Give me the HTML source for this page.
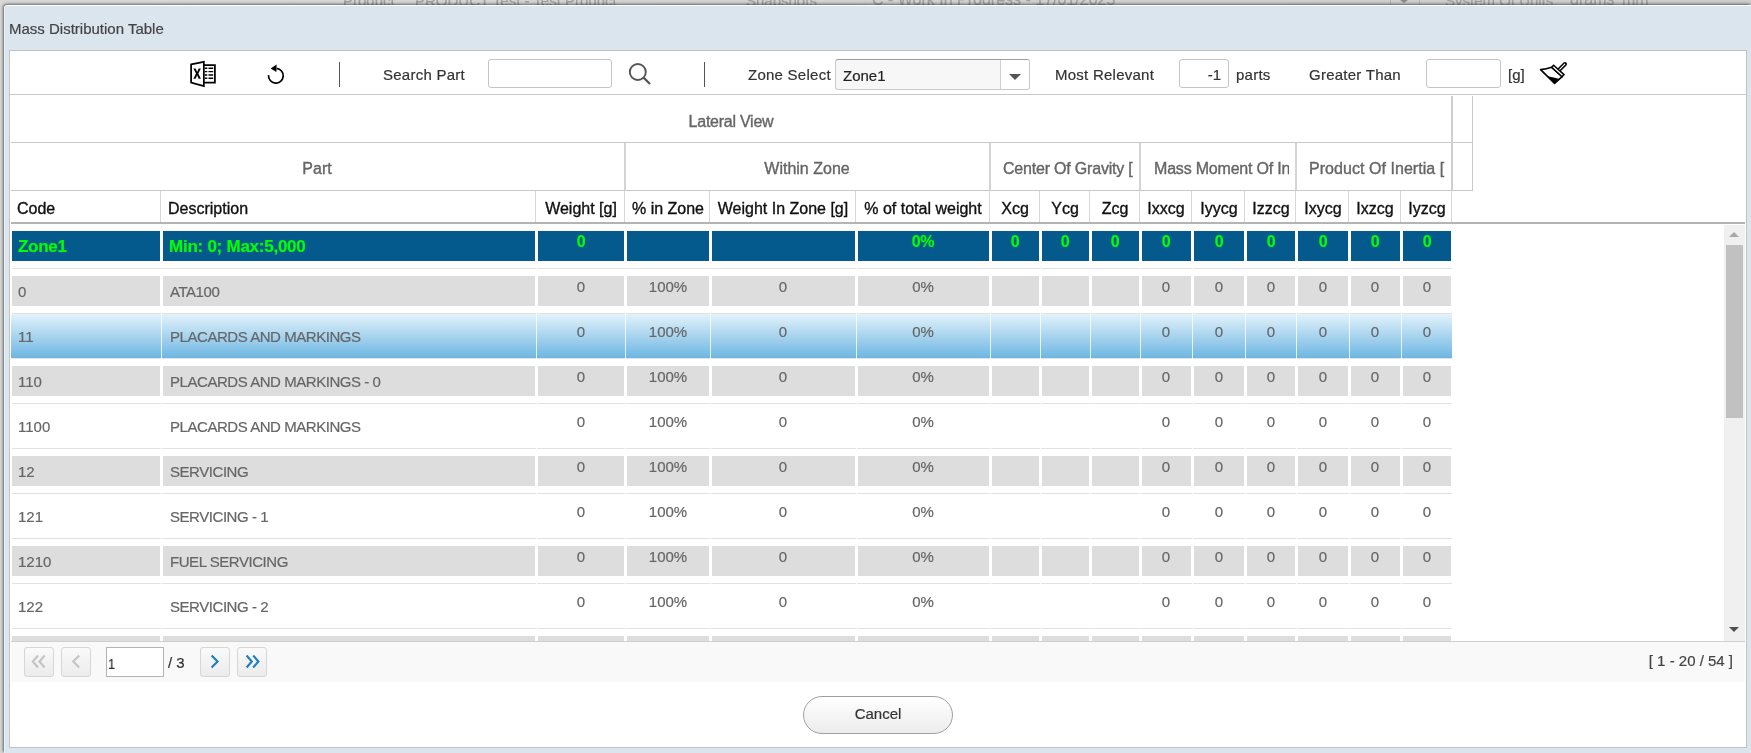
<!DOCTYPE html>
<html><head><meta charset="utf-8"><title>Mass Distribution Table</title>
<style>
html,body{margin:0;padding:0;width:1751px;height:753px;overflow:hidden;background:#c9c9c9}
body{position:relative;font-family:"Liberation Sans", sans-serif}
body div{position:absolute}
.t{white-space:nowrap;line-height:1;will-change:transform;-webkit-text-stroke:0.2px currentColor}
</style></head><body>
<div style="left:0px;top:0px;width:1751px;height:753px;background:linear-gradient(90deg,#d8d8d8,#cdcdcd)"></div>
<div class="t" style="left:343px;top:-6.70px;font-size:15px;color:#a0a0a0;font-weight:normal;">Product</div>
<div class="t" style="left:415px;top:-6.70px;font-size:15px;color:#a0a0a0;font-weight:normal;">PRODUCT Test - Test Product</div>
<div class="t" style="left:746px;top:-6.70px;font-size:15px;color:#a0a0a0;font-weight:normal;">Snapshots</div>
<div class="t" style="left:872px;top:-7.54px;font-size:16px;color:#a0a0a0;font-weight:normal;">C - Work In Progress - 17/01/2025</div>
<div class="t" style="left:1445px;top:-6.70px;font-size:15px;color:#a0a0a0;font-weight:normal;">System Of Units</div>
<div class="t" style="left:1570px;top:-7.54px;font-size:16px;color:#a0a0a0;font-weight:normal;">grams</div>
<div class="t" style="left:1622px;top:-7.54px;font-size:16px;color:#a0a0a0;font-weight:normal;">mm</div>
<div style="left:864px;top:0px;width:1px;height:5px;background:#cfcfcf"></div>
<div style="left:1390px;top:0px;width:1px;height:5px;background:#b5b5b5"></div>
<div style="left:1419px;top:0px;width:1px;height:5px;background:#b5b5b5"></div>
<div style="left:1400px;top:0px;width:0;height:0;border-left:4.5px solid transparent;border-right:4.5px solid transparent;border-top:3px solid #8a8a8a"></div>
<div style="left:4px;top:5px;width:1747px;height:748px;background:#dbe5ee;border-top-left-radius:4px;box-shadow:-1px -1px 3px rgba(0,0,0,0.55),inset 0 1px 0 rgba(255,255,255,0.9),inset 1px 0 0 rgba(255,255,255,0.45)"></div>
<div class="t" style="left:9px;top:21.30px;font-size:15px;color:#444;font-weight:normal;">Mass Distribution Table</div>
<div style="left:10px;top:51px;width:1736px;height:696px;background:#fff;box-shadow:0 0 0 1px #c3c3c3"></div>
<div style="left:10px;top:94px;width:1736px;height:1px;background:#c8c8c8"></div>
<svg style="position:absolute;left:186px;top:58px" width="36" height="32" viewBox="0 0 36 32">
<path d="M5.1 6.35 L17.85 3.85 L17.85 28.05 L5.1 24.65 Z" fill="#fff" stroke="#000" stroke-width="1.75" stroke-linejoin="miter"/>
<path d="M17.85 7.05 L28.9 7.05 L28.9 24.65 L17.85 24.65" fill="none" stroke="#000" stroke-width="1.75"/>
<path d="M18.9 10.2 H21.3 M22.5 10.2 H27.2 M18.9 13.6 H21.3 M22.5 13.6 H27.2 M18.9 17.0 H21.3 M22.5 17.0 H27.2 M18.9 20.2 H21.3 M22.5 20.2 H27.2" stroke="#000" stroke-width="1.4"/>
<path d="M7.4 10.4 L9.6 10.4 L11.15 13.9 L12.7 10.4 L14.9 10.4 L12.3 15.6 L14.9 20.8 L12.7 20.8 L11.15 17.3 L9.6 20.8 L7.4 20.8 L10.0 15.6 Z" fill="#000"/>
</svg>
<svg style="position:absolute;left:262px;top:62px" width="28" height="26" viewBox="0 0 28 26">
<path d="M6.55 13.1 A7.35 7.35 0 1 0 14.6 6.4" fill="none" stroke="#000" stroke-width="1.75"/>
<path d="M8.6 6.4 L14.6 2.6 L14.4 10.0 Z" fill="#000"/>
</svg>
<div style="left:339px;top:62px;width:1px;height:25px;background:#555"></div>
<div class="t" style="left:383px;top:66.90px;font-size:15px;color:#333;font-weight:normal;letter-spacing:0.25px">Search Part</div>
<div style="left:488px;top:59px;width:124px;height:29px;border:1px solid #c4c4c4;border-radius:3px;box-sizing:border-box;background:#fff"></div>
<svg style="position:absolute;left:624px;top:60px" width="32" height="28" viewBox="0 0 32 28">
<circle cx="13.8" cy="12" r="8.0" fill="none" stroke="#555" stroke-width="1.9"/>
<path d="M19.6 17.6 L26 24" stroke="#555" stroke-width="2.2" stroke-linecap="butt"/>
</svg>
<div style="left:704px;top:62px;width:1px;height:25px;background:#555"></div>
<div class="t" style="left:748px;top:66.70px;font-size:15px;color:#333;font-weight:normal;letter-spacing:0.25px">Zone Select</div>
<div style="left:835px;top:59px;width:195px;height:31px;border:1px solid #c9c9c9;border-top-color:#9d9d9d;border-radius:3px;box-sizing:border-box;background:#f7f7f7"></div>
<div style="left:1000px;top:60px;width:1px;height:29px;background:#d0d0d0"></div>
<div style="left:1001px;top:60px;width:28px;height:29px;background:#fff;border-radius:0 2px 2px 0"></div>
<div style="left:1009px;top:74px;width:0;height:0;border-left:6px solid transparent;border-right:6px solid transparent;border-top:6px solid #555"></div>
<div class="t" style="left:843px;top:67.50px;font-size:15px;color:#222;font-weight:normal;">Zone1</div>
<div class="t" style="left:1054.5px;top:66.70px;font-size:15px;color:#333;font-weight:normal;letter-spacing:0.25px">Most Relevant</div>
<div style="left:1179px;top:59px;width:50px;height:29px;border:1px solid #c4c4c4;border-radius:3px;box-sizing:border-box;background:#fff"></div>
<div class="t" style="left:821px;width:400px;text-align:right;top:67.10px;font-size:15px;color:#333;font-weight:normal;">-1</div>
<div class="t" style="left:1236px;top:66.70px;font-size:15px;color:#333;font-weight:normal;letter-spacing:0.25px">parts</div>
<div class="t" style="left:1309px;top:66.80px;font-size:15px;color:#333;font-weight:normal;letter-spacing:0.25px">Greater Than</div>
<div style="left:1426px;top:59px;width:75px;height:29px;border:1px solid #c4c4c4;border-radius:3px;box-sizing:border-box;background:#fff"></div>
<div class="t" style="left:1507.5px;top:66.80px;font-size:15px;color:#333;font-weight:normal;">[g]</div>
<svg style="position:absolute;left:1536px;top:58px" width="36" height="30" viewBox="0 0 36 30">
<path d="M23.0 12.0 L29.0 6.0" stroke="#000" stroke-width="4" stroke-linecap="round"/>
<path d="M23.4 11.6 L28.8 6.2" stroke="#fff" stroke-width="1.2" stroke-linecap="round"/>
<path d="M4.6 11.6 Q10.5 11.3 15.7 9.3 L26.1 18.7 L18.6 25.4 Z" fill="#fff" stroke="#000" stroke-width="1.6" stroke-linejoin="round"/>
<path d="M11.5 18.2 Q17.5 19 23.6 21.1 L18.6 25.4 Z" fill="#000"/>
<path d="M17.6 7.2 L28.0 16.6 L26.1 18.7 L15.7 9.3 Z" fill="#fff" stroke="#000" stroke-width="1.5" stroke-linejoin="miter"/>
</svg>
<div style="left:11px;top:142px;width:1462px;height:1px;background:#c9c9c9"></div>
<div style="left:1451px;top:96px;width:2px;height:95px;background:#cfcfcf"></div>
<div style="left:1451px;top:191px;width:1px;height:32px;background:#d8d8d8"></div>
<div style="left:1472px;top:96px;width:1px;height:95px;background:#c9c9c9"></div>
<div style="left:11px;top:190px;width:1462px;height:1px;background:#c9c9c9"></div>
<div class="t" style="left:531px;width:400px;text-align:center;top:114.26px;font-size:16px;color:#666;font-weight:normal;letter-spacing:-0.25px;-webkit-text-stroke:0.38px #666">Lateral View</div>
<div style="left:624px;top:143px;width:2px;height:47px;background:#d4d4d4"></div>
<div style="left:989px;top:143px;width:2px;height:47px;background:#d4d4d4"></div>
<div style="left:1139px;top:143px;width:2px;height:47px;background:#d4d4d4"></div>
<div style="left:1295px;top:143px;width:2px;height:47px;background:#d4d4d4"></div>
<div class="t" style="left:117px;width:400px;text-align:center;top:161.06px;font-size:16px;color:#666;font-weight:normal;-webkit-text-stroke:0.38px #666">Part</div>
<div class="t" style="left:607px;width:400px;text-align:center;top:161.06px;font-size:16px;color:#666;font-weight:normal;-webkit-text-stroke:0.38px #666">Within Zone</div>
<div style="left:992px;top:143px;width:146px;height:47px;overflow:hidden">
<div class="t" style="left:11px;top:18.06px;font-size:16px;color:#666;letter-spacing:-0.2px;-webkit-text-stroke:0.38px #666">Center Of Gravity [</div></div>
<div style="left:1142px;top:143px;width:147px;height:47px;overflow:hidden">
<div class="t" style="left:11.5px;top:18.06px;font-size:16px;color:#666;letter-spacing:-0.2px;-webkit-text-stroke:0.38px #666">Mass Moment Of Inertia</div></div>
<div style="left:1298px;top:143px;width:152px;height:47px;overflow:hidden">
<div class="t" style="left:11px;top:18.06px;font-size:16px;color:#666;letter-spacing:0.05px;-webkit-text-stroke:0.38px #666">Product Of Inertia [</div></div>
<div style="left:160px;top:191px;width:1px;height:32px;background:#d8d8d8"></div>
<div style="left:535px;top:191px;width:1px;height:32px;background:#d8d8d8"></div>
<div style="left:624px;top:191px;width:1px;height:32px;background:#d8d8d8"></div>
<div style="left:709px;top:191px;width:1px;height:32px;background:#d8d8d8"></div>
<div style="left:855px;top:191px;width:1px;height:32px;background:#d8d8d8"></div>
<div style="left:989px;top:191px;width:1px;height:32px;background:#d8d8d8"></div>
<div style="left:1039px;top:191px;width:1px;height:32px;background:#d8d8d8"></div>
<div style="left:1089px;top:191px;width:1px;height:32px;background:#d8d8d8"></div>
<div style="left:1139px;top:191px;width:1px;height:32px;background:#d8d8d8"></div>
<div style="left:1191px;top:191px;width:1px;height:32px;background:#d8d8d8"></div>
<div style="left:1244px;top:191px;width:1px;height:32px;background:#d8d8d8"></div>
<div style="left:1295px;top:191px;width:1px;height:32px;background:#d8d8d8"></div>
<div style="left:1348px;top:191px;width:1px;height:32px;background:#d8d8d8"></div>
<div style="left:1400px;top:191px;width:1px;height:32px;background:#d8d8d8"></div>
<div style="left:11px;top:222px;width:1734px;height:2px;background:#b4b4b4"></div>
<div class="t" style="left:17px;top:201.46px;font-size:16px;color:#111;font-weight:normal;-webkit-text-stroke:0.35px #111">Code</div>
<div class="t" style="left:168px;top:201.46px;font-size:16px;color:#111;font-weight:normal;-webkit-text-stroke:0.35px #111">Description</div>
<div class="t" style="left:380.5px;width:400px;text-align:center;top:201.46px;font-size:16px;color:#111;font-weight:normal;-webkit-text-stroke:0.35px #111">Weight [g]</div>
<div class="t" style="left:467.5px;width:400px;text-align:center;top:201.46px;font-size:16px;color:#111;font-weight:normal;-webkit-text-stroke:0.35px #111">% in Zone</div>
<div class="t" style="left:583.0px;width:400px;text-align:center;top:201.46px;font-size:16px;color:#111;font-weight:normal;-webkit-text-stroke:0.35px #111">Weight In Zone [g]</div>
<div class="t" style="left:723.0px;width:400px;text-align:center;top:201.46px;font-size:16px;color:#111;font-weight:normal;-webkit-text-stroke:0.35px #111">% of total weight</div>
<div class="t" style="left:815.0px;width:400px;text-align:center;top:201.46px;font-size:16px;color:#111;font-weight:normal;-webkit-text-stroke:0.35px #111">Xcg</div>
<div class="t" style="left:865.0px;width:400px;text-align:center;top:201.46px;font-size:16px;color:#111;font-weight:normal;-webkit-text-stroke:0.35px #111">Ycg</div>
<div class="t" style="left:915.0px;width:400px;text-align:center;top:201.46px;font-size:16px;color:#111;font-weight:normal;-webkit-text-stroke:0.35px #111">Zcg</div>
<div class="t" style="left:966.0px;width:400px;text-align:center;top:201.46px;font-size:16px;color:#111;font-weight:normal;-webkit-text-stroke:0.35px #111">Ixxcg</div>
<div class="t" style="left:1018.5px;width:400px;text-align:center;top:201.46px;font-size:16px;color:#111;font-weight:normal;-webkit-text-stroke:0.35px #111">Iyycg</div>
<div class="t" style="left:1070.5px;width:400px;text-align:center;top:201.46px;font-size:16px;color:#111;font-weight:normal;-webkit-text-stroke:0.35px #111">Izzcg</div>
<div class="t" style="left:1122.5px;width:400px;text-align:center;top:201.46px;font-size:16px;color:#111;font-weight:normal;-webkit-text-stroke:0.35px #111">Ixycg</div>
<div class="t" style="left:1175.0px;width:400px;text-align:center;top:201.46px;font-size:16px;color:#111;font-weight:normal;-webkit-text-stroke:0.35px #111">Ixzcg</div>
<div class="t" style="left:1226.5px;width:400px;text-align:center;top:201.46px;font-size:16px;color:#111;font-weight:normal;-webkit-text-stroke:0.35px #111">Iyzcg</div>
<div style="left:11px;top:224px;width:1713px;height:417px;overflow:hidden">
<div style="left:1px;top:44px;width:149px;height:1px;background:#e2e2e2"></div>
<div style="left:151px;top:44px;width:374px;height:1px;background:#e2e2e2"></div>
<div style="left:526px;top:44px;width:88px;height:1px;background:#e2e2e2"></div>
<div style="left:615px;top:44px;width:84px;height:1px;background:#e2e2e2"></div>
<div style="left:700px;top:44px;width:145px;height:1px;background:#e2e2e2"></div>
<div style="left:846px;top:44px;width:133px;height:1px;background:#e2e2e2"></div>
<div style="left:980px;top:44px;width:49px;height:1px;background:#e2e2e2"></div>
<div style="left:1030px;top:44px;width:49px;height:1px;background:#e2e2e2"></div>
<div style="left:1080px;top:44px;width:49px;height:1px;background:#e2e2e2"></div>
<div style="left:1130px;top:44px;width:51px;height:1px;background:#e2e2e2"></div>
<div style="left:1182px;top:44px;width:52px;height:1px;background:#e2e2e2"></div>
<div style="left:1235px;top:44px;width:50px;height:1px;background:#e2e2e2"></div>
<div style="left:1286px;top:44px;width:52px;height:1px;background:#e2e2e2"></div>
<div style="left:1339px;top:44px;width:51px;height:1px;background:#e2e2e2"></div>
<div style="left:1391px;top:44px;width:50px;height:1px;background:#e2e2e2"></div>
<div style="left:1px;top:7px;width:148px;height:30px;background:#045a8d"></div>
<div style="left:152px;top:7px;width:372px;height:30px;background:#045a8d"></div>
<div style="left:527px;top:7px;width:86px;height:30px;background:#045a8d"></div>
<div style="left:616px;top:7px;width:82px;height:30px;background:#045a8d"></div>
<div style="left:701px;top:7px;width:143px;height:30px;background:#045a8d"></div>
<div style="left:847px;top:7px;width:131px;height:30px;background:#045a8d"></div>
<div style="left:981px;top:7px;width:47px;height:30px;background:#045a8d"></div>
<div style="left:1031px;top:7px;width:47px;height:30px;background:#045a8d"></div>
<div style="left:1081px;top:7px;width:47px;height:30px;background:#045a8d"></div>
<div style="left:1131px;top:7px;width:49px;height:30px;background:#045a8d"></div>
<div style="left:1183px;top:7px;width:50px;height:30px;background:#045a8d"></div>
<div style="left:1236px;top:7px;width:48px;height:30px;background:#045a8d"></div>
<div style="left:1287px;top:7px;width:50px;height:30px;background:#045a8d"></div>
<div style="left:1340px;top:7px;width:49px;height:30px;background:#045a8d"></div>
<div style="left:1392px;top:7px;width:48px;height:30px;background:#045a8d"></div>
<div class="t" style="left:7px;top:14.11px;font-size:17px;color:#00ff00;font-weight:bold;letter-spacing:-0.3px">Zone1</div>
<div class="t" style="left:158px;top:14.11px;font-size:17px;color:#00ff00;font-weight:bold;letter-spacing:-0.25px">Min: 0; Max:5,000</div>
<div class="t" style="left:369.5px;width:400px;text-align:center;top:10.46px;font-size:16px;color:#00ff00;font-weight:bold;letter-spacing:-0.4px">0</div>
<div class="t" style="left:712.0px;width:400px;text-align:center;top:10.46px;font-size:16px;color:#00ff00;font-weight:bold;letter-spacing:-0.4px">0%</div>
<div class="t" style="left:804.0px;width:400px;text-align:center;top:10.46px;font-size:16px;color:#00ff00;font-weight:bold;letter-spacing:-0.4px">0</div>
<div class="t" style="left:854.0px;width:400px;text-align:center;top:10.46px;font-size:16px;color:#00ff00;font-weight:bold;letter-spacing:-0.4px">0</div>
<div class="t" style="left:904.0px;width:400px;text-align:center;top:10.46px;font-size:16px;color:#00ff00;font-weight:bold;letter-spacing:-0.4px">0</div>
<div class="t" style="left:955.0px;width:400px;text-align:center;top:10.46px;font-size:16px;color:#00ff00;font-weight:bold;letter-spacing:-0.4px">0</div>
<div class="t" style="left:1007.5px;width:400px;text-align:center;top:10.46px;font-size:16px;color:#00ff00;font-weight:bold;letter-spacing:-0.4px">0</div>
<div class="t" style="left:1059.5px;width:400px;text-align:center;top:10.46px;font-size:16px;color:#00ff00;font-weight:bold;letter-spacing:-0.4px">0</div>
<div class="t" style="left:1111.5px;width:400px;text-align:center;top:10.46px;font-size:16px;color:#00ff00;font-weight:bold;letter-spacing:-0.4px">0</div>
<div class="t" style="left:1164.0px;width:400px;text-align:center;top:10.46px;font-size:16px;color:#00ff00;font-weight:bold;letter-spacing:-0.4px">0</div>
<div class="t" style="left:1215.5px;width:400px;text-align:center;top:10.46px;font-size:16px;color:#00ff00;font-weight:bold;letter-spacing:-0.4px">0</div>
<div style="left:1px;top:89px;width:149px;height:1px;background:#e2e2e2"></div>
<div style="left:151px;top:89px;width:374px;height:1px;background:#e2e2e2"></div>
<div style="left:526px;top:89px;width:88px;height:1px;background:#e2e2e2"></div>
<div style="left:615px;top:89px;width:84px;height:1px;background:#e2e2e2"></div>
<div style="left:700px;top:89px;width:145px;height:1px;background:#e2e2e2"></div>
<div style="left:846px;top:89px;width:133px;height:1px;background:#e2e2e2"></div>
<div style="left:980px;top:89px;width:49px;height:1px;background:#e2e2e2"></div>
<div style="left:1030px;top:89px;width:49px;height:1px;background:#e2e2e2"></div>
<div style="left:1080px;top:89px;width:49px;height:1px;background:#e2e2e2"></div>
<div style="left:1130px;top:89px;width:51px;height:1px;background:#e2e2e2"></div>
<div style="left:1182px;top:89px;width:52px;height:1px;background:#e2e2e2"></div>
<div style="left:1235px;top:89px;width:50px;height:1px;background:#e2e2e2"></div>
<div style="left:1286px;top:89px;width:52px;height:1px;background:#e2e2e2"></div>
<div style="left:1339px;top:89px;width:51px;height:1px;background:#e2e2e2"></div>
<div style="left:1391px;top:89px;width:50px;height:1px;background:#e2e2e2"></div>
<div style="left:1px;top:52px;width:148px;height:30px;background:#dddddd"></div>
<div style="left:152px;top:52px;width:372px;height:30px;background:#dddddd"></div>
<div style="left:527px;top:52px;width:86px;height:30px;background:#dddddd"></div>
<div style="left:616px;top:52px;width:82px;height:30px;background:#dddddd"></div>
<div style="left:701px;top:52px;width:143px;height:30px;background:#dddddd"></div>
<div style="left:847px;top:52px;width:131px;height:30px;background:#dddddd"></div>
<div style="left:981px;top:52px;width:47px;height:30px;background:#dddddd"></div>
<div style="left:1031px;top:52px;width:47px;height:30px;background:#dddddd"></div>
<div style="left:1081px;top:52px;width:47px;height:30px;background:#dddddd"></div>
<div style="left:1131px;top:52px;width:49px;height:30px;background:#dddddd"></div>
<div style="left:1183px;top:52px;width:50px;height:30px;background:#dddddd"></div>
<div style="left:1236px;top:52px;width:48px;height:30px;background:#dddddd"></div>
<div style="left:1287px;top:52px;width:50px;height:30px;background:#dddddd"></div>
<div style="left:1340px;top:52px;width:49px;height:30px;background:#dddddd"></div>
<div style="left:1392px;top:52px;width:48px;height:30px;background:#dddddd"></div>
<div class="t" style="left:7px;top:60.30px;font-size:15px;color:#666;font-weight:normal;">0</div>
<div class="t" style="left:159px;top:60.30px;font-size:15px;color:#666;font-weight:normal;letter-spacing:-0.45px">ATA100</div>
<div class="t" style="left:369.5px;width:400px;text-align:center;top:55.30px;font-size:15px;color:#666;font-weight:normal;">0</div>
<div class="t" style="left:456.5px;width:400px;text-align:center;top:55.30px;font-size:15px;color:#666;font-weight:normal;">100%</div>
<div class="t" style="left:572.0px;width:400px;text-align:center;top:55.30px;font-size:15px;color:#666;font-weight:normal;">0</div>
<div class="t" style="left:712.0px;width:400px;text-align:center;top:55.30px;font-size:15px;color:#666;font-weight:normal;">0%</div>
<div class="t" style="left:955.0px;width:400px;text-align:center;top:55.30px;font-size:15px;color:#666;font-weight:normal;">0</div>
<div class="t" style="left:1007.5px;width:400px;text-align:center;top:55.30px;font-size:15px;color:#666;font-weight:normal;">0</div>
<div class="t" style="left:1059.5px;width:400px;text-align:center;top:55.30px;font-size:15px;color:#666;font-weight:normal;">0</div>
<div class="t" style="left:1111.5px;width:400px;text-align:center;top:55.30px;font-size:15px;color:#666;font-weight:normal;">0</div>
<div class="t" style="left:1164.0px;width:400px;text-align:center;top:55.30px;font-size:15px;color:#666;font-weight:normal;">0</div>
<div class="t" style="left:1215.5px;width:400px;text-align:center;top:55.30px;font-size:15px;color:#666;font-weight:normal;">0</div>
<div style="left:-1px;top:90px;width:1442px;height:44px;background:linear-gradient(#e3f2fb,#6db6e2)"></div>
<div style="left:150px;top:90px;width:1px;height:44px;background:rgba(255,255,255,0.8)"></div>
<div style="left:525px;top:90px;width:1px;height:44px;background:rgba(255,255,255,0.8)"></div>
<div style="left:614px;top:90px;width:1px;height:44px;background:rgba(255,255,255,0.8)"></div>
<div style="left:699px;top:90px;width:1px;height:44px;background:rgba(255,255,255,0.8)"></div>
<div style="left:845px;top:90px;width:1px;height:44px;background:rgba(255,255,255,0.8)"></div>
<div style="left:979px;top:90px;width:1px;height:44px;background:rgba(255,255,255,0.8)"></div>
<div style="left:1029px;top:90px;width:1px;height:44px;background:rgba(255,255,255,0.8)"></div>
<div style="left:1079px;top:90px;width:1px;height:44px;background:rgba(255,255,255,0.8)"></div>
<div style="left:1129px;top:90px;width:1px;height:44px;background:rgba(255,255,255,0.8)"></div>
<div style="left:1181px;top:90px;width:1px;height:44px;background:rgba(255,255,255,0.8)"></div>
<div style="left:1234px;top:90px;width:1px;height:44px;background:rgba(255,255,255,0.8)"></div>
<div style="left:1285px;top:90px;width:1px;height:44px;background:rgba(255,255,255,0.8)"></div>
<div style="left:1338px;top:90px;width:1px;height:44px;background:rgba(255,255,255,0.8)"></div>
<div style="left:1390px;top:90px;width:1px;height:44px;background:rgba(255,255,255,0.8)"></div>
<div style="left:1px;top:134px;width:149px;height:1px;background:#e2e2e2"></div>
<div style="left:151px;top:134px;width:374px;height:1px;background:#e2e2e2"></div>
<div style="left:526px;top:134px;width:88px;height:1px;background:#e2e2e2"></div>
<div style="left:615px;top:134px;width:84px;height:1px;background:#e2e2e2"></div>
<div style="left:700px;top:134px;width:145px;height:1px;background:#e2e2e2"></div>
<div style="left:846px;top:134px;width:133px;height:1px;background:#e2e2e2"></div>
<div style="left:980px;top:134px;width:49px;height:1px;background:#e2e2e2"></div>
<div style="left:1030px;top:134px;width:49px;height:1px;background:#e2e2e2"></div>
<div style="left:1080px;top:134px;width:49px;height:1px;background:#e2e2e2"></div>
<div style="left:1130px;top:134px;width:51px;height:1px;background:#e2e2e2"></div>
<div style="left:1182px;top:134px;width:52px;height:1px;background:#e2e2e2"></div>
<div style="left:1235px;top:134px;width:50px;height:1px;background:#e2e2e2"></div>
<div style="left:1286px;top:134px;width:52px;height:1px;background:#e2e2e2"></div>
<div style="left:1339px;top:134px;width:51px;height:1px;background:#e2e2e2"></div>
<div style="left:1391px;top:134px;width:50px;height:1px;background:#e2e2e2"></div>
<div class="t" style="left:7px;top:105.30px;font-size:15px;color:#666;font-weight:normal;">11</div>
<div class="t" style="left:159px;top:105.30px;font-size:15px;color:#666;font-weight:normal;letter-spacing:-0.45px">PLACARDS AND MARKINGS</div>
<div class="t" style="left:369.5px;width:400px;text-align:center;top:100.30px;font-size:15px;color:#666;font-weight:normal;">0</div>
<div class="t" style="left:456.5px;width:400px;text-align:center;top:100.30px;font-size:15px;color:#666;font-weight:normal;">100%</div>
<div class="t" style="left:572.0px;width:400px;text-align:center;top:100.30px;font-size:15px;color:#666;font-weight:normal;">0</div>
<div class="t" style="left:712.0px;width:400px;text-align:center;top:100.30px;font-size:15px;color:#666;font-weight:normal;">0%</div>
<div class="t" style="left:955.0px;width:400px;text-align:center;top:100.30px;font-size:15px;color:#666;font-weight:normal;">0</div>
<div class="t" style="left:1007.5px;width:400px;text-align:center;top:100.30px;font-size:15px;color:#666;font-weight:normal;">0</div>
<div class="t" style="left:1059.5px;width:400px;text-align:center;top:100.30px;font-size:15px;color:#666;font-weight:normal;">0</div>
<div class="t" style="left:1111.5px;width:400px;text-align:center;top:100.30px;font-size:15px;color:#666;font-weight:normal;">0</div>
<div class="t" style="left:1164.0px;width:400px;text-align:center;top:100.30px;font-size:15px;color:#666;font-weight:normal;">0</div>
<div class="t" style="left:1215.5px;width:400px;text-align:center;top:100.30px;font-size:15px;color:#666;font-weight:normal;">0</div>
<div style="left:1px;top:179px;width:149px;height:1px;background:#e2e2e2"></div>
<div style="left:151px;top:179px;width:374px;height:1px;background:#e2e2e2"></div>
<div style="left:526px;top:179px;width:88px;height:1px;background:#e2e2e2"></div>
<div style="left:615px;top:179px;width:84px;height:1px;background:#e2e2e2"></div>
<div style="left:700px;top:179px;width:145px;height:1px;background:#e2e2e2"></div>
<div style="left:846px;top:179px;width:133px;height:1px;background:#e2e2e2"></div>
<div style="left:980px;top:179px;width:49px;height:1px;background:#e2e2e2"></div>
<div style="left:1030px;top:179px;width:49px;height:1px;background:#e2e2e2"></div>
<div style="left:1080px;top:179px;width:49px;height:1px;background:#e2e2e2"></div>
<div style="left:1130px;top:179px;width:51px;height:1px;background:#e2e2e2"></div>
<div style="left:1182px;top:179px;width:52px;height:1px;background:#e2e2e2"></div>
<div style="left:1235px;top:179px;width:50px;height:1px;background:#e2e2e2"></div>
<div style="left:1286px;top:179px;width:52px;height:1px;background:#e2e2e2"></div>
<div style="left:1339px;top:179px;width:51px;height:1px;background:#e2e2e2"></div>
<div style="left:1391px;top:179px;width:50px;height:1px;background:#e2e2e2"></div>
<div style="left:1px;top:142px;width:148px;height:30px;background:#dddddd"></div>
<div style="left:152px;top:142px;width:372px;height:30px;background:#dddddd"></div>
<div style="left:527px;top:142px;width:86px;height:30px;background:#dddddd"></div>
<div style="left:616px;top:142px;width:82px;height:30px;background:#dddddd"></div>
<div style="left:701px;top:142px;width:143px;height:30px;background:#dddddd"></div>
<div style="left:847px;top:142px;width:131px;height:30px;background:#dddddd"></div>
<div style="left:981px;top:142px;width:47px;height:30px;background:#dddddd"></div>
<div style="left:1031px;top:142px;width:47px;height:30px;background:#dddddd"></div>
<div style="left:1081px;top:142px;width:47px;height:30px;background:#dddddd"></div>
<div style="left:1131px;top:142px;width:49px;height:30px;background:#dddddd"></div>
<div style="left:1183px;top:142px;width:50px;height:30px;background:#dddddd"></div>
<div style="left:1236px;top:142px;width:48px;height:30px;background:#dddddd"></div>
<div style="left:1287px;top:142px;width:50px;height:30px;background:#dddddd"></div>
<div style="left:1340px;top:142px;width:49px;height:30px;background:#dddddd"></div>
<div style="left:1392px;top:142px;width:48px;height:30px;background:#dddddd"></div>
<div class="t" style="left:7px;top:150.30px;font-size:15px;color:#666;font-weight:normal;">110</div>
<div class="t" style="left:159px;top:150.30px;font-size:15px;color:#666;font-weight:normal;letter-spacing:-0.45px">PLACARDS AND MARKINGS - 0</div>
<div class="t" style="left:369.5px;width:400px;text-align:center;top:145.30px;font-size:15px;color:#666;font-weight:normal;">0</div>
<div class="t" style="left:456.5px;width:400px;text-align:center;top:145.30px;font-size:15px;color:#666;font-weight:normal;">100%</div>
<div class="t" style="left:572.0px;width:400px;text-align:center;top:145.30px;font-size:15px;color:#666;font-weight:normal;">0</div>
<div class="t" style="left:712.0px;width:400px;text-align:center;top:145.30px;font-size:15px;color:#666;font-weight:normal;">0%</div>
<div class="t" style="left:955.0px;width:400px;text-align:center;top:145.30px;font-size:15px;color:#666;font-weight:normal;">0</div>
<div class="t" style="left:1007.5px;width:400px;text-align:center;top:145.30px;font-size:15px;color:#666;font-weight:normal;">0</div>
<div class="t" style="left:1059.5px;width:400px;text-align:center;top:145.30px;font-size:15px;color:#666;font-weight:normal;">0</div>
<div class="t" style="left:1111.5px;width:400px;text-align:center;top:145.30px;font-size:15px;color:#666;font-weight:normal;">0</div>
<div class="t" style="left:1164.0px;width:400px;text-align:center;top:145.30px;font-size:15px;color:#666;font-weight:normal;">0</div>
<div class="t" style="left:1215.5px;width:400px;text-align:center;top:145.30px;font-size:15px;color:#666;font-weight:normal;">0</div>
<div style="left:1px;top:224px;width:149px;height:1px;background:#e2e2e2"></div>
<div style="left:151px;top:224px;width:374px;height:1px;background:#e2e2e2"></div>
<div style="left:526px;top:224px;width:88px;height:1px;background:#e2e2e2"></div>
<div style="left:615px;top:224px;width:84px;height:1px;background:#e2e2e2"></div>
<div style="left:700px;top:224px;width:145px;height:1px;background:#e2e2e2"></div>
<div style="left:846px;top:224px;width:133px;height:1px;background:#e2e2e2"></div>
<div style="left:980px;top:224px;width:49px;height:1px;background:#e2e2e2"></div>
<div style="left:1030px;top:224px;width:49px;height:1px;background:#e2e2e2"></div>
<div style="left:1080px;top:224px;width:49px;height:1px;background:#e2e2e2"></div>
<div style="left:1130px;top:224px;width:51px;height:1px;background:#e2e2e2"></div>
<div style="left:1182px;top:224px;width:52px;height:1px;background:#e2e2e2"></div>
<div style="left:1235px;top:224px;width:50px;height:1px;background:#e2e2e2"></div>
<div style="left:1286px;top:224px;width:52px;height:1px;background:#e2e2e2"></div>
<div style="left:1339px;top:224px;width:51px;height:1px;background:#e2e2e2"></div>
<div style="left:1391px;top:224px;width:50px;height:1px;background:#e2e2e2"></div>
<div class="t" style="left:7px;top:195.30px;font-size:15px;color:#666;font-weight:normal;">1100</div>
<div class="t" style="left:159px;top:195.30px;font-size:15px;color:#666;font-weight:normal;letter-spacing:-0.45px">PLACARDS AND MARKINGS</div>
<div class="t" style="left:369.5px;width:400px;text-align:center;top:190.30px;font-size:15px;color:#666;font-weight:normal;">0</div>
<div class="t" style="left:456.5px;width:400px;text-align:center;top:190.30px;font-size:15px;color:#666;font-weight:normal;">100%</div>
<div class="t" style="left:572.0px;width:400px;text-align:center;top:190.30px;font-size:15px;color:#666;font-weight:normal;">0</div>
<div class="t" style="left:712.0px;width:400px;text-align:center;top:190.30px;font-size:15px;color:#666;font-weight:normal;">0%</div>
<div class="t" style="left:955.0px;width:400px;text-align:center;top:190.30px;font-size:15px;color:#666;font-weight:normal;">0</div>
<div class="t" style="left:1007.5px;width:400px;text-align:center;top:190.30px;font-size:15px;color:#666;font-weight:normal;">0</div>
<div class="t" style="left:1059.5px;width:400px;text-align:center;top:190.30px;font-size:15px;color:#666;font-weight:normal;">0</div>
<div class="t" style="left:1111.5px;width:400px;text-align:center;top:190.30px;font-size:15px;color:#666;font-weight:normal;">0</div>
<div class="t" style="left:1164.0px;width:400px;text-align:center;top:190.30px;font-size:15px;color:#666;font-weight:normal;">0</div>
<div class="t" style="left:1215.5px;width:400px;text-align:center;top:190.30px;font-size:15px;color:#666;font-weight:normal;">0</div>
<div style="left:1px;top:269px;width:149px;height:1px;background:#e2e2e2"></div>
<div style="left:151px;top:269px;width:374px;height:1px;background:#e2e2e2"></div>
<div style="left:526px;top:269px;width:88px;height:1px;background:#e2e2e2"></div>
<div style="left:615px;top:269px;width:84px;height:1px;background:#e2e2e2"></div>
<div style="left:700px;top:269px;width:145px;height:1px;background:#e2e2e2"></div>
<div style="left:846px;top:269px;width:133px;height:1px;background:#e2e2e2"></div>
<div style="left:980px;top:269px;width:49px;height:1px;background:#e2e2e2"></div>
<div style="left:1030px;top:269px;width:49px;height:1px;background:#e2e2e2"></div>
<div style="left:1080px;top:269px;width:49px;height:1px;background:#e2e2e2"></div>
<div style="left:1130px;top:269px;width:51px;height:1px;background:#e2e2e2"></div>
<div style="left:1182px;top:269px;width:52px;height:1px;background:#e2e2e2"></div>
<div style="left:1235px;top:269px;width:50px;height:1px;background:#e2e2e2"></div>
<div style="left:1286px;top:269px;width:52px;height:1px;background:#e2e2e2"></div>
<div style="left:1339px;top:269px;width:51px;height:1px;background:#e2e2e2"></div>
<div style="left:1391px;top:269px;width:50px;height:1px;background:#e2e2e2"></div>
<div style="left:1px;top:232px;width:148px;height:30px;background:#dddddd"></div>
<div style="left:152px;top:232px;width:372px;height:30px;background:#dddddd"></div>
<div style="left:527px;top:232px;width:86px;height:30px;background:#dddddd"></div>
<div style="left:616px;top:232px;width:82px;height:30px;background:#dddddd"></div>
<div style="left:701px;top:232px;width:143px;height:30px;background:#dddddd"></div>
<div style="left:847px;top:232px;width:131px;height:30px;background:#dddddd"></div>
<div style="left:981px;top:232px;width:47px;height:30px;background:#dddddd"></div>
<div style="left:1031px;top:232px;width:47px;height:30px;background:#dddddd"></div>
<div style="left:1081px;top:232px;width:47px;height:30px;background:#dddddd"></div>
<div style="left:1131px;top:232px;width:49px;height:30px;background:#dddddd"></div>
<div style="left:1183px;top:232px;width:50px;height:30px;background:#dddddd"></div>
<div style="left:1236px;top:232px;width:48px;height:30px;background:#dddddd"></div>
<div style="left:1287px;top:232px;width:50px;height:30px;background:#dddddd"></div>
<div style="left:1340px;top:232px;width:49px;height:30px;background:#dddddd"></div>
<div style="left:1392px;top:232px;width:48px;height:30px;background:#dddddd"></div>
<div class="t" style="left:7px;top:240.30px;font-size:15px;color:#666;font-weight:normal;">12</div>
<div class="t" style="left:159px;top:240.30px;font-size:15px;color:#666;font-weight:normal;letter-spacing:-0.45px">SERVICING</div>
<div class="t" style="left:369.5px;width:400px;text-align:center;top:235.30px;font-size:15px;color:#666;font-weight:normal;">0</div>
<div class="t" style="left:456.5px;width:400px;text-align:center;top:235.30px;font-size:15px;color:#666;font-weight:normal;">100%</div>
<div class="t" style="left:572.0px;width:400px;text-align:center;top:235.30px;font-size:15px;color:#666;font-weight:normal;">0</div>
<div class="t" style="left:712.0px;width:400px;text-align:center;top:235.30px;font-size:15px;color:#666;font-weight:normal;">0%</div>
<div class="t" style="left:955.0px;width:400px;text-align:center;top:235.30px;font-size:15px;color:#666;font-weight:normal;">0</div>
<div class="t" style="left:1007.5px;width:400px;text-align:center;top:235.30px;font-size:15px;color:#666;font-weight:normal;">0</div>
<div class="t" style="left:1059.5px;width:400px;text-align:center;top:235.30px;font-size:15px;color:#666;font-weight:normal;">0</div>
<div class="t" style="left:1111.5px;width:400px;text-align:center;top:235.30px;font-size:15px;color:#666;font-weight:normal;">0</div>
<div class="t" style="left:1164.0px;width:400px;text-align:center;top:235.30px;font-size:15px;color:#666;font-weight:normal;">0</div>
<div class="t" style="left:1215.5px;width:400px;text-align:center;top:235.30px;font-size:15px;color:#666;font-weight:normal;">0</div>
<div style="left:1px;top:314px;width:149px;height:1px;background:#e2e2e2"></div>
<div style="left:151px;top:314px;width:374px;height:1px;background:#e2e2e2"></div>
<div style="left:526px;top:314px;width:88px;height:1px;background:#e2e2e2"></div>
<div style="left:615px;top:314px;width:84px;height:1px;background:#e2e2e2"></div>
<div style="left:700px;top:314px;width:145px;height:1px;background:#e2e2e2"></div>
<div style="left:846px;top:314px;width:133px;height:1px;background:#e2e2e2"></div>
<div style="left:980px;top:314px;width:49px;height:1px;background:#e2e2e2"></div>
<div style="left:1030px;top:314px;width:49px;height:1px;background:#e2e2e2"></div>
<div style="left:1080px;top:314px;width:49px;height:1px;background:#e2e2e2"></div>
<div style="left:1130px;top:314px;width:51px;height:1px;background:#e2e2e2"></div>
<div style="left:1182px;top:314px;width:52px;height:1px;background:#e2e2e2"></div>
<div style="left:1235px;top:314px;width:50px;height:1px;background:#e2e2e2"></div>
<div style="left:1286px;top:314px;width:52px;height:1px;background:#e2e2e2"></div>
<div style="left:1339px;top:314px;width:51px;height:1px;background:#e2e2e2"></div>
<div style="left:1391px;top:314px;width:50px;height:1px;background:#e2e2e2"></div>
<div class="t" style="left:7px;top:285.30px;font-size:15px;color:#666;font-weight:normal;">121</div>
<div class="t" style="left:159px;top:285.30px;font-size:15px;color:#666;font-weight:normal;letter-spacing:-0.45px">SERVICING - 1</div>
<div class="t" style="left:369.5px;width:400px;text-align:center;top:280.30px;font-size:15px;color:#666;font-weight:normal;">0</div>
<div class="t" style="left:456.5px;width:400px;text-align:center;top:280.30px;font-size:15px;color:#666;font-weight:normal;">100%</div>
<div class="t" style="left:572.0px;width:400px;text-align:center;top:280.30px;font-size:15px;color:#666;font-weight:normal;">0</div>
<div class="t" style="left:712.0px;width:400px;text-align:center;top:280.30px;font-size:15px;color:#666;font-weight:normal;">0%</div>
<div class="t" style="left:955.0px;width:400px;text-align:center;top:280.30px;font-size:15px;color:#666;font-weight:normal;">0</div>
<div class="t" style="left:1007.5px;width:400px;text-align:center;top:280.30px;font-size:15px;color:#666;font-weight:normal;">0</div>
<div class="t" style="left:1059.5px;width:400px;text-align:center;top:280.30px;font-size:15px;color:#666;font-weight:normal;">0</div>
<div class="t" style="left:1111.5px;width:400px;text-align:center;top:280.30px;font-size:15px;color:#666;font-weight:normal;">0</div>
<div class="t" style="left:1164.0px;width:400px;text-align:center;top:280.30px;font-size:15px;color:#666;font-weight:normal;">0</div>
<div class="t" style="left:1215.5px;width:400px;text-align:center;top:280.30px;font-size:15px;color:#666;font-weight:normal;">0</div>
<div style="left:1px;top:359px;width:149px;height:1px;background:#e2e2e2"></div>
<div style="left:151px;top:359px;width:374px;height:1px;background:#e2e2e2"></div>
<div style="left:526px;top:359px;width:88px;height:1px;background:#e2e2e2"></div>
<div style="left:615px;top:359px;width:84px;height:1px;background:#e2e2e2"></div>
<div style="left:700px;top:359px;width:145px;height:1px;background:#e2e2e2"></div>
<div style="left:846px;top:359px;width:133px;height:1px;background:#e2e2e2"></div>
<div style="left:980px;top:359px;width:49px;height:1px;background:#e2e2e2"></div>
<div style="left:1030px;top:359px;width:49px;height:1px;background:#e2e2e2"></div>
<div style="left:1080px;top:359px;width:49px;height:1px;background:#e2e2e2"></div>
<div style="left:1130px;top:359px;width:51px;height:1px;background:#e2e2e2"></div>
<div style="left:1182px;top:359px;width:52px;height:1px;background:#e2e2e2"></div>
<div style="left:1235px;top:359px;width:50px;height:1px;background:#e2e2e2"></div>
<div style="left:1286px;top:359px;width:52px;height:1px;background:#e2e2e2"></div>
<div style="left:1339px;top:359px;width:51px;height:1px;background:#e2e2e2"></div>
<div style="left:1391px;top:359px;width:50px;height:1px;background:#e2e2e2"></div>
<div style="left:1px;top:322px;width:148px;height:30px;background:#dddddd"></div>
<div style="left:152px;top:322px;width:372px;height:30px;background:#dddddd"></div>
<div style="left:527px;top:322px;width:86px;height:30px;background:#dddddd"></div>
<div style="left:616px;top:322px;width:82px;height:30px;background:#dddddd"></div>
<div style="left:701px;top:322px;width:143px;height:30px;background:#dddddd"></div>
<div style="left:847px;top:322px;width:131px;height:30px;background:#dddddd"></div>
<div style="left:981px;top:322px;width:47px;height:30px;background:#dddddd"></div>
<div style="left:1031px;top:322px;width:47px;height:30px;background:#dddddd"></div>
<div style="left:1081px;top:322px;width:47px;height:30px;background:#dddddd"></div>
<div style="left:1131px;top:322px;width:49px;height:30px;background:#dddddd"></div>
<div style="left:1183px;top:322px;width:50px;height:30px;background:#dddddd"></div>
<div style="left:1236px;top:322px;width:48px;height:30px;background:#dddddd"></div>
<div style="left:1287px;top:322px;width:50px;height:30px;background:#dddddd"></div>
<div style="left:1340px;top:322px;width:49px;height:30px;background:#dddddd"></div>
<div style="left:1392px;top:322px;width:48px;height:30px;background:#dddddd"></div>
<div class="t" style="left:7px;top:330.30px;font-size:15px;color:#666;font-weight:normal;">1210</div>
<div class="t" style="left:159px;top:330.30px;font-size:15px;color:#666;font-weight:normal;letter-spacing:-0.45px">FUEL SERVICING</div>
<div class="t" style="left:369.5px;width:400px;text-align:center;top:325.30px;font-size:15px;color:#666;font-weight:normal;">0</div>
<div class="t" style="left:456.5px;width:400px;text-align:center;top:325.30px;font-size:15px;color:#666;font-weight:normal;">100%</div>
<div class="t" style="left:572.0px;width:400px;text-align:center;top:325.30px;font-size:15px;color:#666;font-weight:normal;">0</div>
<div class="t" style="left:712.0px;width:400px;text-align:center;top:325.30px;font-size:15px;color:#666;font-weight:normal;">0%</div>
<div class="t" style="left:955.0px;width:400px;text-align:center;top:325.30px;font-size:15px;color:#666;font-weight:normal;">0</div>
<div class="t" style="left:1007.5px;width:400px;text-align:center;top:325.30px;font-size:15px;color:#666;font-weight:normal;">0</div>
<div class="t" style="left:1059.5px;width:400px;text-align:center;top:325.30px;font-size:15px;color:#666;font-weight:normal;">0</div>
<div class="t" style="left:1111.5px;width:400px;text-align:center;top:325.30px;font-size:15px;color:#666;font-weight:normal;">0</div>
<div class="t" style="left:1164.0px;width:400px;text-align:center;top:325.30px;font-size:15px;color:#666;font-weight:normal;">0</div>
<div class="t" style="left:1215.5px;width:400px;text-align:center;top:325.30px;font-size:15px;color:#666;font-weight:normal;">0</div>
<div style="left:1px;top:404px;width:149px;height:1px;background:#e2e2e2"></div>
<div style="left:151px;top:404px;width:374px;height:1px;background:#e2e2e2"></div>
<div style="left:526px;top:404px;width:88px;height:1px;background:#e2e2e2"></div>
<div style="left:615px;top:404px;width:84px;height:1px;background:#e2e2e2"></div>
<div style="left:700px;top:404px;width:145px;height:1px;background:#e2e2e2"></div>
<div style="left:846px;top:404px;width:133px;height:1px;background:#e2e2e2"></div>
<div style="left:980px;top:404px;width:49px;height:1px;background:#e2e2e2"></div>
<div style="left:1030px;top:404px;width:49px;height:1px;background:#e2e2e2"></div>
<div style="left:1080px;top:404px;width:49px;height:1px;background:#e2e2e2"></div>
<div style="left:1130px;top:404px;width:51px;height:1px;background:#e2e2e2"></div>
<div style="left:1182px;top:404px;width:52px;height:1px;background:#e2e2e2"></div>
<div style="left:1235px;top:404px;width:50px;height:1px;background:#e2e2e2"></div>
<div style="left:1286px;top:404px;width:52px;height:1px;background:#e2e2e2"></div>
<div style="left:1339px;top:404px;width:51px;height:1px;background:#e2e2e2"></div>
<div style="left:1391px;top:404px;width:50px;height:1px;background:#e2e2e2"></div>
<div class="t" style="left:7px;top:375.30px;font-size:15px;color:#666;font-weight:normal;">122</div>
<div class="t" style="left:159px;top:375.30px;font-size:15px;color:#666;font-weight:normal;letter-spacing:-0.45px">SERVICING - 2</div>
<div class="t" style="left:369.5px;width:400px;text-align:center;top:370.30px;font-size:15px;color:#666;font-weight:normal;">0</div>
<div class="t" style="left:456.5px;width:400px;text-align:center;top:370.30px;font-size:15px;color:#666;font-weight:normal;">100%</div>
<div class="t" style="left:572.0px;width:400px;text-align:center;top:370.30px;font-size:15px;color:#666;font-weight:normal;">0</div>
<div class="t" style="left:712.0px;width:400px;text-align:center;top:370.30px;font-size:15px;color:#666;font-weight:normal;">0%</div>
<div class="t" style="left:955.0px;width:400px;text-align:center;top:370.30px;font-size:15px;color:#666;font-weight:normal;">0</div>
<div class="t" style="left:1007.5px;width:400px;text-align:center;top:370.30px;font-size:15px;color:#666;font-weight:normal;">0</div>
<div class="t" style="left:1059.5px;width:400px;text-align:center;top:370.30px;font-size:15px;color:#666;font-weight:normal;">0</div>
<div class="t" style="left:1111.5px;width:400px;text-align:center;top:370.30px;font-size:15px;color:#666;font-weight:normal;">0</div>
<div class="t" style="left:1164.0px;width:400px;text-align:center;top:370.30px;font-size:15px;color:#666;font-weight:normal;">0</div>
<div class="t" style="left:1215.5px;width:400px;text-align:center;top:370.30px;font-size:15px;color:#666;font-weight:normal;">0</div>
<div style="left:1px;top:449px;width:149px;height:1px;background:#e2e2e2"></div>
<div style="left:151px;top:449px;width:374px;height:1px;background:#e2e2e2"></div>
<div style="left:526px;top:449px;width:88px;height:1px;background:#e2e2e2"></div>
<div style="left:615px;top:449px;width:84px;height:1px;background:#e2e2e2"></div>
<div style="left:700px;top:449px;width:145px;height:1px;background:#e2e2e2"></div>
<div style="left:846px;top:449px;width:133px;height:1px;background:#e2e2e2"></div>
<div style="left:980px;top:449px;width:49px;height:1px;background:#e2e2e2"></div>
<div style="left:1030px;top:449px;width:49px;height:1px;background:#e2e2e2"></div>
<div style="left:1080px;top:449px;width:49px;height:1px;background:#e2e2e2"></div>
<div style="left:1130px;top:449px;width:51px;height:1px;background:#e2e2e2"></div>
<div style="left:1182px;top:449px;width:52px;height:1px;background:#e2e2e2"></div>
<div style="left:1235px;top:449px;width:50px;height:1px;background:#e2e2e2"></div>
<div style="left:1286px;top:449px;width:52px;height:1px;background:#e2e2e2"></div>
<div style="left:1339px;top:449px;width:51px;height:1px;background:#e2e2e2"></div>
<div style="left:1391px;top:449px;width:50px;height:1px;background:#e2e2e2"></div>
<div style="left:1px;top:412px;width:148px;height:30px;background:#dddddd"></div>
<div style="left:152px;top:412px;width:372px;height:30px;background:#dddddd"></div>
<div style="left:527px;top:412px;width:86px;height:30px;background:#dddddd"></div>
<div style="left:616px;top:412px;width:82px;height:30px;background:#dddddd"></div>
<div style="left:701px;top:412px;width:143px;height:30px;background:#dddddd"></div>
<div style="left:847px;top:412px;width:131px;height:30px;background:#dddddd"></div>
<div style="left:981px;top:412px;width:47px;height:30px;background:#dddddd"></div>
<div style="left:1031px;top:412px;width:47px;height:30px;background:#dddddd"></div>
<div style="left:1081px;top:412px;width:47px;height:30px;background:#dddddd"></div>
<div style="left:1131px;top:412px;width:49px;height:30px;background:#dddddd"></div>
<div style="left:1183px;top:412px;width:50px;height:30px;background:#dddddd"></div>
<div style="left:1236px;top:412px;width:48px;height:30px;background:#dddddd"></div>
<div style="left:1287px;top:412px;width:50px;height:30px;background:#dddddd"></div>
<div style="left:1340px;top:412px;width:49px;height:30px;background:#dddddd"></div>
<div style="left:1392px;top:412px;width:48px;height:30px;background:#dddddd"></div>
<div class="t" style="left:7px;top:420.30px;font-size:15px;color:#666;font-weight:normal;">1220</div>
<div class="t" style="left:159px;top:420.30px;font-size:15px;color:#666;font-weight:normal;letter-spacing:-0.45px">FUEL SERVICING - 1</div>
<div class="t" style="left:369.5px;width:400px;text-align:center;top:415.30px;font-size:15px;color:#666;font-weight:normal;">0</div>
<div class="t" style="left:456.5px;width:400px;text-align:center;top:415.30px;font-size:15px;color:#666;font-weight:normal;">100%</div>
<div class="t" style="left:572.0px;width:400px;text-align:center;top:415.30px;font-size:15px;color:#666;font-weight:normal;">0</div>
<div class="t" style="left:712.0px;width:400px;text-align:center;top:415.30px;font-size:15px;color:#666;font-weight:normal;">0%</div>
<div class="t" style="left:955.0px;width:400px;text-align:center;top:415.30px;font-size:15px;color:#666;font-weight:normal;">0</div>
<div class="t" style="left:1007.5px;width:400px;text-align:center;top:415.30px;font-size:15px;color:#666;font-weight:normal;">0</div>
<div class="t" style="left:1059.5px;width:400px;text-align:center;top:415.30px;font-size:15px;color:#666;font-weight:normal;">0</div>
<div class="t" style="left:1111.5px;width:400px;text-align:center;top:415.30px;font-size:15px;color:#666;font-weight:normal;">0</div>
<div class="t" style="left:1164.0px;width:400px;text-align:center;top:415.30px;font-size:15px;color:#666;font-weight:normal;">0</div>
<div class="t" style="left:1215.5px;width:400px;text-align:center;top:415.30px;font-size:15px;color:#666;font-weight:normal;">0</div>
</div>
<div style="left:1724px;top:225px;width:21px;height:416px;background:#f0f0f0"></div>
<div style="left:1729px;top:232px;width:0;height:0;border-left:5px solid transparent;border-right:5px solid transparent;border-bottom:5px solid #a8a8a8"></div>
<div style="left:1726px;top:245px;width:17px;height:173px;background:#c1c1c1"></div>
<div style="left:1729px;top:627px;width:0;height:0;border-left:5px solid transparent;border-right:5px solid transparent;border-top:5px solid #505050"></div>
<div style="left:11px;top:641px;width:1734px;height:1px;background:#cfcfcf"></div>
<div style="left:11px;top:642px;width:1734px;height:40px;background:#f9f9f9"></div>
<div style="left:24px;top:647px;width:30px;height:30px;border:1px solid #d6d6d6;border-radius:3px;box-sizing:border-box;background:linear-gradient(#fafafa,#ececec)"></div>
<svg style="position:absolute;left:24px;top:647px" width="30" height="30" viewBox="0 0 30 30"><path d="M14 8.5 L8.8 14.5 L14 20.5 M20.6 8.5 L15.4 14.5 L20.6 20.5" fill="none" stroke="#c4c4c4" stroke-width="2.1"/></svg>
<div style="left:61px;top:647px;width:30px;height:30px;border:1px solid #d6d6d6;border-radius:3px;box-sizing:border-box;background:linear-gradient(#fafafa,#ececec)"></div>
<svg style="position:absolute;left:61px;top:647px" width="30" height="30" viewBox="0 0 30 30"><path d="M18.2 8.5 L12.2 14.5 L18.2 20.5" fill="none" stroke="#c4c4c4" stroke-width="2.1"/></svg>
<div style="left:106px;top:647px;width:58px;height:30px;border:1px solid #b3b3b3;box-sizing:border-box;background:#fff"></div>
<div class="t" style="left:107.5px;top:655.60px;font-size:15px;color:#333;font-weight:normal;transform:scaleX(0.85);transform-origin:0 0">1</div>
<div class="t" style="left:168px;top:655.30px;font-size:15px;color:#333;font-weight:normal;">/ 3</div>
<div style="left:200px;top:647px;width:30px;height:30px;border:1px solid #d6d6d6;border-radius:3px;box-sizing:border-box;background:linear-gradient(#fafafa,#ececec)"></div>
<svg style="position:absolute;left:200px;top:647px" width="30" height="30" viewBox="0 0 30 30"><path d="M11.6 8.5 L17.6 14.5 L11.6 20.5" fill="none" stroke="#1a7fc1" stroke-width="2.1"/></svg>
<div style="left:237px;top:647px;width:30px;height:30px;border:1px solid #d6d6d6;border-radius:3px;box-sizing:border-box;background:linear-gradient(#fafafa,#ececec)"></div>
<svg style="position:absolute;left:237px;top:647px" width="30" height="30" viewBox="0 0 30 30"><path d="M9.6 8.5 L14.8 14.5 L9.6 20.5 M16.2 8.5 L21.4 14.5 L16.2 20.5" fill="none" stroke="#1a7fc1" stroke-width="2.1"/></svg>
<div class="t" style="left:1333px;width:400px;text-align:right;top:653.30px;font-size:15px;color:#444;font-weight:normal;">[ 1 - 20 / 54 ]</div>
<div style="left:803px;top:696px;width:150px;height:38px;border:1px solid #a0a0a0;border-radius:19px;box-sizing:border-box;background:linear-gradient(#ffffff,#ececec)"></div>
<div class="t" style="left:678px;width:400px;text-align:center;top:706.30px;font-size:15px;color:#333;font-weight:normal;">Cancel</div>
</body></html>
